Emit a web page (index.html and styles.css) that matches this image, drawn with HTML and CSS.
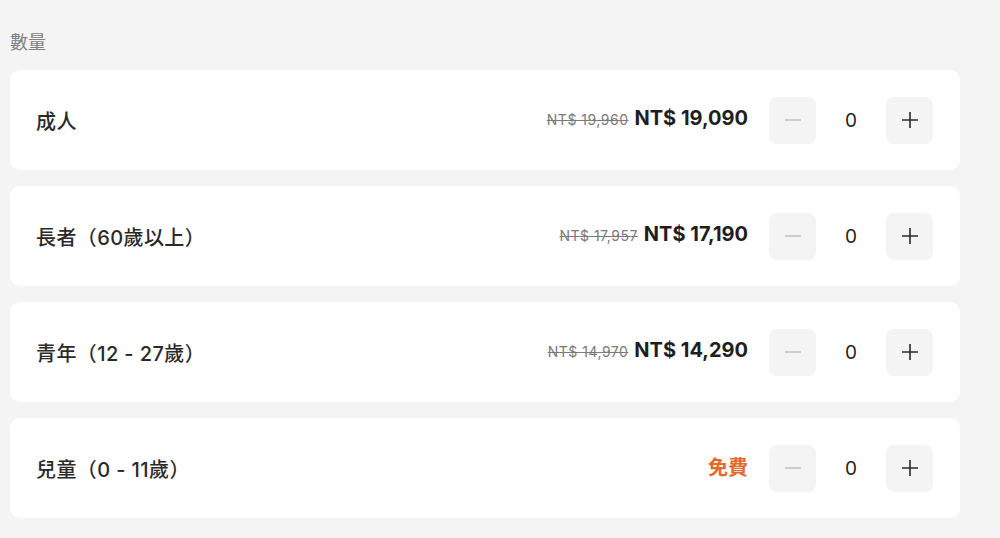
FILE: index.html
```html
<!DOCTYPE html>
<html lang="zh-Hant">
<head>
<meta charset="utf-8">
<link rel="stylesheet" href="styles.css">
</head>
<body>
<div class="page">
  <div class="section-title">數量</div>
  <div class="list">
    <div class="card">
      <div class="label">成人</div>
      <div class="right">
        <div class="price"><span class="old">NT$ 19,960</span><span class="new">NT$ 19,090</span></div>
        <div class="counter">
          <button class="btn disabled"><svg width="18" height="18" viewBox="0 0 18 18"><path d="M1 9h16" stroke="currentColor" stroke-width="1.6"/></svg></button>
          <span class="count">0</span>
          <button class="btn"><svg width="18" height="18" viewBox="0 0 18 18"><path d="M1 9h16M9 1v16" stroke="currentColor" stroke-width="1.6"/></svg></button>
        </div>
      </div>
    </div>
    <div class="card">
      <div class="label">長者（60歲以上）</div>
      <div class="right">
        <div class="price"><span class="old">NT$ 17,957</span><span class="new">NT$ 17,190</span></div>
        <div class="counter">
          <button class="btn disabled"><svg width="18" height="18" viewBox="0 0 18 18"><path d="M1 9h16" stroke="currentColor" stroke-width="1.6"/></svg></button>
          <span class="count">0</span>
          <button class="btn"><svg width="18" height="18" viewBox="0 0 18 18"><path d="M1 9h16M9 1v16" stroke="currentColor" stroke-width="1.6"/></svg></button>
        </div>
      </div>
    </div>
    <div class="card">
      <div class="label">青年（12 - 27歲）</div>
      <div class="right">
        <div class="price"><span class="old">NT$ 14,970</span><span class="new">NT$ 14,290</span></div>
        <div class="counter">
          <button class="btn disabled"><svg width="18" height="18" viewBox="0 0 18 18"><path d="M1 9h16" stroke="currentColor" stroke-width="1.6"/></svg></button>
          <span class="count">0</span>
          <button class="btn"><svg width="18" height="18" viewBox="0 0 18 18"><path d="M1 9h16M9 1v16" stroke="currentColor" stroke-width="1.6"/></svg></button>
        </div>
      </div>
    </div>
    <div class="card">
      <div class="label">兒童（0 - 11歲）</div>
      <div class="right">
        <div class="price"><span class="free">免費</span></div>
        <div class="counter">
          <button class="btn disabled"><svg width="18" height="18" viewBox="0 0 18 18"><path d="M1 9h16" stroke="currentColor" stroke-width="1.6"/></svg></button>
          <span class="count">0</span>
          <button class="btn"><svg width="18" height="18" viewBox="0 0 18 18"><path d="M1 9h16M9 1v16" stroke="currentColor" stroke-width="1.6"/></svg></button>
        </div>
      </div>
    </div>
  </div>
</div>
</body>
</html>
```
FILE: styles.css
```css
html, body {
  margin: 0;
  padding: 0;
  background: #f4f4f4;
}
body {
  font-family: Inter, "Noto Sans CJK TC", sans-serif;
  color: #222;
}
.page {
  padding: 0 10px;
  width: 950px;
}
.section-title {
  padding-top: 31px;
  line-height: 24px;
  font-size: 18px;
  color: #808080;
  margin-bottom: 15px;
}
.list {
  display: flex;
  flex-direction: column;
  gap: 16px;
}
.card {
  background: #fff;
  border-radius: 10px;
  height: 100px;
  box-sizing: border-box;
  padding: 0 27px 0 26px;
  display: flex;
  align-items: center;
  justify-content: space-between;
}
.label {
  font-size: 20px;
  font-weight: 500;
  color: #2a2a2a;
  letter-spacing: 0.4px;
}
.right {
  display: flex;
  align-items: center;
  gap: 21px;
}
.price {
  display: flex;
  align-items: baseline;
  gap: 6px;
  margin-top: -4px;
}
.old {
  font-size: 14px;
  color: #7a7a7a;
  text-decoration: line-through;
  letter-spacing: 0.5px;
}
.new {
  font-size: 20px;
  font-weight: 700;
  color: #1e1e1e;
}
.free {
  font-size: 20px;
  font-weight: 700;
  color: #e36a2b;
}
.counter {
  display: flex;
  align-items: center;
}
.btn {
  width: 47px;
  height: 47px;
  border: 0;
  padding: 0;
  border-radius: 8px;
  background: #f4f4f4;
  color: #2a2a2a;
  display: flex;
  align-items: center;
  justify-content: center;
}
.btn.disabled {
  color: #c4c4c4;
}
.count {
  width: 70px;
  text-align: center;
  font-size: 19px;
  color: #1e1e1e;
}
```
